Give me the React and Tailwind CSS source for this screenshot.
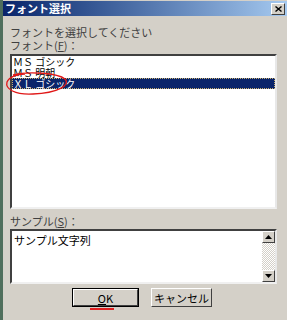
const FONT = { fontFamily: '"Noto Sans CJK JP", "DejaVu Sans", sans-serif' };

function ScrollArrow({ up }) {
  return (
    <div className="h-[12px] w-[13px] bg-[#d4d0c8] border-t border-l border-t-white border-l-white border-b border-r border-b-[#404040] border-r-[#404040] flex items-center justify-center">
      <svg width="7" height="4" viewBox="0 0 7 4">
        {up ? <path d="M3.5 0 L7 4 L0 4 Z" fill="#000" /> : <path d="M0 0 L7 0 L3.5 4 Z" fill="#000" />}
      </svg>
    </div>
  );
}

function Button({ children, isDefault }) {
  return (
    <div
      className={
        isDefault
          ? "w-[67px] h-[19px] border border-black flex"
          : "w-[61px] h-[19px] flex"
      }
    >
      <div className="flex-1 bg-[#d4d0c8] border border-t-white border-l-white border-b-[#404040] border-r-[#404040] flex items-center justify-center text-[11px] leading-[12px] text-black">
        {children}
      </div>
    </div>
  );
}

export default function App() {
  const items = ["ＭＳ ゴシック", "ＭＳ 明朝", "ＸＬ ゴシック"];
  return (
    <div className="w-[287px] h-[320px] overflow-hidden flex bg-[#4f6e5c]" style={FONT}>
      <div className="ml-[3px] flex-1 bg-[#d4d0c8] flex flex-col relative">
        <div className="h-[1px] bg-[#d4d0c8]" />
        <div className="h-[15px] flex items-center justify-between bg-gradient-to-r from-[#0a246a] to-[#a6caf0] pl-[2px] pr-[2px]">
          <span className="text-white font-bold text-[11px] leading-[11px]">フォント選択</span>
          <div className="w-[14px] h-[12px] bg-[#d4d0c8] border border-t-white border-l-white border-b-[#404040] border-r-[#404040] flex items-center justify-center">
            <svg width="7" height="6" viewBox="0 0 7 6">
              <path d="M0.5 0.5 L6.5 5.5 M6.5 0.5 L0.5 5.5" stroke="#000" strokeWidth="1.4" />
            </svg>
          </div>
        </div>
        <div className="pl-[7px] pr-[7px] flex flex-col text-[11px] text-[#000]">
          <div className="h-[10px]" />
          <div className="h-[13px] leading-[13px] text-[#404040]">フォントを選択してください</div>
          <div className="h-[13px] leading-[13px] text-[#404040]">フォント(<span className="underline">F</span>)：</div>
          <div className="h-[2px]" />
          <div className="w-[267px] h-[155px] bg-white border-t-2 border-l-2 border-t-[#404040] border-l-[#404040] border-b-2 border-r-2 border-b-[#f0f0f0] border-r-[#e8e8e8]">
            {items.map((it, i) => (
              <div
                key={it}
                className={
                  i === 2
                    ? "h-[11px] text-[10px] leading-[9px] bg-[#0a246a] text-white border border-dotted border-[#c8b070]"
                    : "h-[11px] text-[10px] leading-[11px] text-[#000] pl-[1px]"
                }
              >
                {it}
              </div>
            ))}
          </div>
          <div className="h-[6px]" />
          <div className="h-[13px] leading-[13px] text-[#404040]">サンプル(<span className="underline">S</span>)：</div>
          <div className="h-[1px]" />
          <div className="w-[267px] h-[55px] bg-white border-t-2 border-l-2 border-t-[#404040] border-l-[#404040] border-b-2 border-r-2 border-b-[#f0f0f0] border-r-[#e8e8e8] flex">
            <div className="flex-1 pl-[2px] pt-[3px] leading-[12px]">サンプル文字列</div>
            <div className="w-[13px] flex flex-col bg-[repeating-conic-gradient(#ffffff_0_25%,#d4d0c8_0_50%)] bg-[length:2px_2px]">
              <ScrollArrow up />
              <div className="flex-1" />
              <ScrollArrow />
            </div>
          </div>
          <div className="h-[4px]" />
          <div className="flex gap-[12px] pl-[62px]">
            <Button isDefault>
              <span className="underline">O</span>K
            </Button>
            <Button>キャンセル</Button>
          </div>
        </div>
        <div className="absolute left-[87px] top-[308px] w-[24px] h-[2px] bg-[#e02020]" />
        <svg className="absolute left-[0px] top-[71px]" width="70" height="26" viewBox="0 0 70 26">
          <path
            d="M10 4 C 25 0, 55 2, 62 8 C 68 14, 55 22, 30 23 C 12 24, 2 18, 4 11 C 6 6, 14 3, 22 3"
            fill="none"
            stroke="#e01818"
            strokeWidth="1.3"
          />
        </svg>
      </div>
    </div>
  );
}
